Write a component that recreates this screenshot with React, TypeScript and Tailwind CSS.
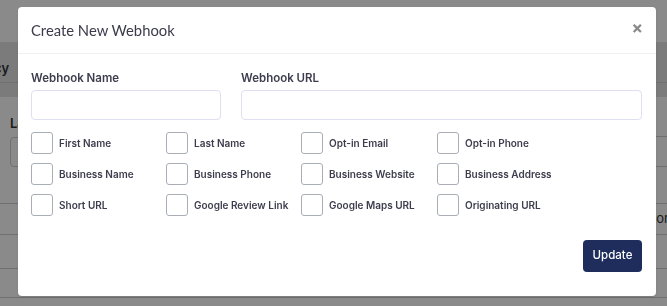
const fieldOptions = [
  "First Name",
  "Last Name",
  "Opt-in Email",
  "Opt-in Phone",
  "Business Name",
  "Business Phone",
  "Business Website",
  "Business Address",
  "Short URL",
  "Google Review Link",
  "Google Maps URL",
  "Originating URL"
];

function BackgroundPage() {
  return (
    <div className="h-[306px] w-full overflow-hidden bg-white text-[#333] font-['Inter',sans-serif]">
      <div className="h-[42px]" />
      <div className="flex h-[40px] items-end bg-[#e4e4e4] pb-[4px] text-[13px] font-semibold">
        <span className="-ml-[38px]">Privacy</span>
      </div>
      <div className="h-[15px] border-t border-[#cecece] bg-[#e4e4e4]" />
      <div className="flex h-[106px] justify-between">
        <div className="pl-[10px] pt-[18px]">
          <p className="text-[13px] font-semibold leading-[16px]">Last</p>
          <div className="mt-[6px] h-[30px] w-[120px] rounded border border-[#cfcfcf]" />
        </div>
        <div className="mt-[39px] h-[31px] w-[100px] border-y border-[#cecece]" />
      </div>
      <div className="flex h-[31px] items-center justify-end border-t border-[#cecece] text-[13px]">
        <span className="-mr-[2px]">Color</span>
      </div>
      <div className="h-[34px] border-t border-[#cecece]" />
      <div className="h-[29px] border-t border-[#cecece]" />
      <div className="border-t border-[#cecece]" />
    </div>
  );
}

export default function App() {
  return (
    <div className="relative h-[306px] w-[667px] overflow-hidden">
      <BackgroundPage />

      <div className="fixed inset-0 bg-black/[0.46] pl-[18px] pt-[7px]">
        <div className="flex h-[289px] w-[638px] flex-col rounded-[4px] bg-white font-['Inter',sans-serif] text-[#3d3d4e] shadow-sm">
          <div className="flex h-[47px] shrink-0 items-center justify-between border-b border-[#eef0f3] pl-[13px] pr-[13px]">
            <h2 className="font-['Lato',sans-serif] text-[14.8px] font-normal text-[#3b3b4b]">Create New Webhook</h2>
            <button type="button" className="pb-[3px] text-[17px] font-bold leading-none text-[#8a8a8a]">
              ×
            </button>
          </div>

          <div className="flex flex-1 flex-col px-[13px] pt-[17px]">
            <div className="grid grid-cols-[190px_401px] gap-x-[20px]">
              <label className="block">
                <span className="block text-[11.5px] font-semibold leading-[15px]">Webhook Name</span>
                <input className="mt-[4px] h-[30px] w-full rounded-[4px] border border-[#dedff0] bg-white outline-none" />
              </label>
              <label className="block">
                <span className="block text-[11.5px] font-semibold leading-[15px]">Webhook URL</span>
                <input className="mt-[4px] h-[30px] w-full rounded-[4px] border border-[#dedff0] bg-white outline-none" />
              </label>
            </div>

            <div className="mt-[12px] grid grid-cols-[135px_135px_136px_135px] gap-y-[9px]">
              {fieldOptions.map((option) => (
                <label key={option} className="flex h-[22px] items-center gap-[6px]">
                  <span className="h-[22px] w-[22px] shrink-0 rounded-[3px] border border-[#a9aeb6] bg-white" />
                  <span className="text-[10px] font-semibold text-[#3d3d4e]">{option}</span>
                </label>
              ))}
            </div>

            <div className="mt-[24px] flex justify-end pr-[1px]">
              <button
                type="button"
                className="h-[32px] w-[59px] rounded-[4px] bg-[#1e2d5c] text-[11.5px] font-medium text-white"
              >
                Update
              </button>
            </div>
          </div>
        </div>
      </div>
    </div>
  );
}
